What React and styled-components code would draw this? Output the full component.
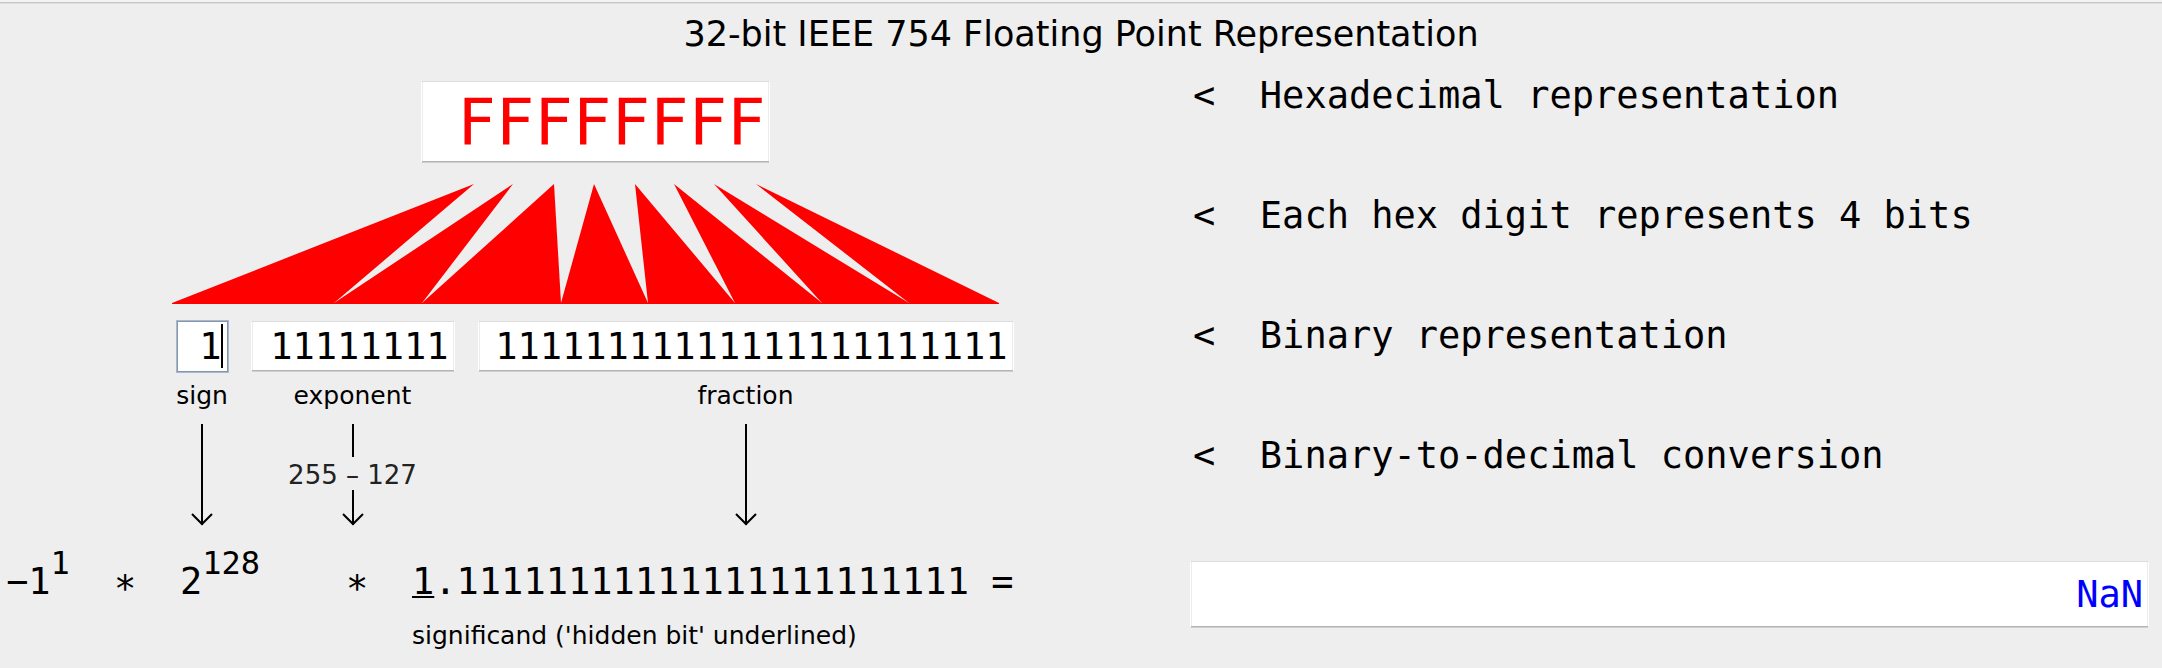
import React from 'react';
import styled, { createGlobalStyle, css } from 'styled-components';

const GlobalStyle = createGlobalStyle`
  *, *::before, *::after { box-sizing: border-box; }
  body {
    margin: 0;
    min-height: 100vh;
    background: #eeeeee;
    color: #000;
    font-family: "DejaVu Sans", sans-serif;
  }
`;

const mono = css`
  font-family: "DejaVu Sans Mono", monospace;
  font-size: 37px;
`;

const Header = styled.header`
  border-top: 2px solid #f3f3f3;
  box-shadow: inset 0 1px #c6c6c6, inset 0 2px #dedede;
  padding: 11px 16px 17px;
  text-align: center;
`;

const Title = styled.h1`
  margin: 0;
  font-size: 35px;
  line-height: 42px;
  font-weight: 400;
`;

const Main = styled.main`
  display: grid;
  grid-template-columns: max-content minmax(0, 1fr);
`;

const Breakdown = styled.section`
  display: flex;
  flex-direction: column;
`;

const Diagram = styled.div`
  display: flex;
  flex-direction: column;
  align-items: center;
  padding: 9px 176px 0;
`;

const TextField = styled.input`
  ${mono}
  display: block;
  width: ${(p) => p.$width || '100%'};
  height: ${(p) => p.$height || '51px'};
  margin: 0;
  padding: 0 5px 0 0;
  border: 1px solid #fff;
  border-top-color: #dcdcdc;
  border-bottom: 1px solid #cfcfcf;
  border-radius: 0;
  outline: none;
  background: #fff;
  box-shadow: inset 0 -1px #b4b4b4, inset 1px 0 #ececec, inset -1px 0 #ececec;
  color: ${(p) => p.$color || '#000'};
  text-align: right;
  caret-color: transparent;
`;

const HexField = styled(TextField)`
  padding-right: 3px;
  font-size: 64px;
`;

const SignField = styled(TextField)`
  border: 1px solid #8496b0;
  box-shadow: 0 0 0 1px #a9b7ca;
`;

const Fan = styled.svg`
  display: block;
  width: 838px;
  height: 119px;
  margin: 22px 0 17px;
  overflow: visible;
`;

const Fields = styled.div`
  display: flex;
  gap: 23px;
`;

const Field = styled.div`
  display: flex;
  flex-direction: column;
  align-items: center;
  width: ${(p) => p.$width};
`;

const FieldBox = styled.div`
  position: relative;
  width: 100%;
`;

const Caret = styled.span`
  position: absolute;
  top: 3px;
  right: 5px;
  width: 2px;
  height: 44px;
  background: #000;
`;

const Label = styled.label`
  margin-top: 8px;
  font-size: 25px;
  line-height: 32px;
`;

const Arrow = styled.svg`
  display: block;
  width: 24px;
  height: ${(p) => p.$height}px;
  fill: none;
  stroke: #000;
  stroke-width: 2;
`;

const ArrowSlot = styled.div`
  display: flex;
  flex-direction: column;
  align-items: center;
  width: 100%;
  margin-top: 12px;
`;

const Bias = styled.span`
  margin-top: 2px;
  font-size: 26px;
  line-height: 30px;
  color: #222;
`;

const Formula = styled.div`
  ${mono}
  display: flex;
  gap: 44px;
  margin-top: 32px;
  padding-left: 6px;
  line-height: 48px;
  white-space: pre;
`;

const Term = styled.span`
  width: ${(p) => p.$width};
`;

const Power = styled.sup`
  font-size: 32px;
  line-height: 0;
  vertical-align: 20px;
`;

const Significand = styled.div`
  display: flex;
  flex-direction: column;
`;

const HiddenBit = styled.u`
  text-decoration-thickness: 2px;
  text-underline-offset: 2px;
`;

const Caption = styled.span`
  margin-top: 14px;
  font-family: "DejaVu Sans", sans-serif;
  font-size: 25px;
  line-height: 32px;
`;

const Side = styled.section`
  padding-right: 13px;
`;

const Notes = styled.ul`
  ${mono}
  display: flex;
  flex-direction: column;
  gap: 72px;
  margin: 0 0 81px;
  padding: 0 0 0 3px;
  list-style: none;
  line-height: 48px;
  white-space: pre;
`;

const notes = [
  'Hexadecimal representation',
  'Each hex digit represents 4 bits',
  'Binary representation',
  'Binary-to-decimal conversion',
];

const apexes = [474, 513, 554, 594, 635, 674, 714, 756];
const bases = [172, 334, 422, 561, 648, 735, 822, 909, 999];

function DownArrow({ height, head = true }) {
  const tip = height - 2;
  return (
    <Arrow $height={height} viewBox={`0 0 24 ${height}`} aria-hidden="true">
      <path d={`M12 0V${height - 1}`} />
      {head && <path d={`M2 ${tip - 10}L12 ${tip}L22 ${tip - 10}`} />}
    </Arrow>
  );
}

export default function App() {
  return (
    <>
      <GlobalStyle />
      <Header>
        <Title>32-bit IEEE 754 Floating Point Representation</Title>
      </Header>
      <Main>
        <Breakdown>
          <Diagram>
            <HexField
              $width="349px"
              $height="82px"
              $color="#ff0000"
              aria-label="Hexadecimal representation"
              defaultValue="FFFFFFFF"
            />
            <Fan viewBox="176 185 838 119" fill="#ff0000" aria-hidden="true">
              {apexes.map((x, i) => (
                <path key={x} d={`M${x} 184L${bases[i + 1]} 303V304H${bases[i]}V303Z`} />
              ))}
            </Fan>
            <Fields>
              <Field $width="51px">
                <FieldBox>
                  <SignField id="sign" defaultValue="1" />
                  <Caret />
                </FieldBox>
                <Label htmlFor="sign">sign</Label>
                <ArrowSlot>
                  <DownArrow height={102} />
                </ArrowSlot>
              </Field>
              <Field $width="204px">
                <TextField id="exponent" defaultValue="11111111" />
                <Label htmlFor="exponent">exponent</Label>
                <ArrowSlot>
                  <DownArrow height={34} head={false} />
                  <Bias>255 – 127</Bias>
                  <DownArrow height={36} />
                </ArrowSlot>
              </Field>
              <Field $width="536px">
                <TextField id="fraction" defaultValue="11111111111111111111111" />
                <Label htmlFor="fraction">fraction</Label>
                <ArrowSlot>
                  <DownArrow height={102} />
                </ArrowSlot>
              </Field>
            </Fields>
          </Diagram>
          <Formula>
            <Term $width="64px">−1<Power>1</Power></Term>
            <Term $width="22px">∗</Term>
            <Term $width="122px">2<Power>128</Power></Term>
            <Term $width="22px">∗</Term>
            <Significand>
              <span><HiddenBit>1</HiddenBit>.11111111111111111111111 =</span>
              <Caption>significand ('hidden bit' underlined)</Caption>
            </Significand>
          </Formula>
        </Breakdown>
        <Side>
          <Notes>
            {notes.map((note) => (
              <li key={note}>{`<  ${note}`}</li>
            ))}
          </Notes>
          <TextField $height="67px" $color="#0000ff" aria-label="Decimal value" defaultValue="NaN" />
        </Side>
      </Main>
    </>
  );
}
